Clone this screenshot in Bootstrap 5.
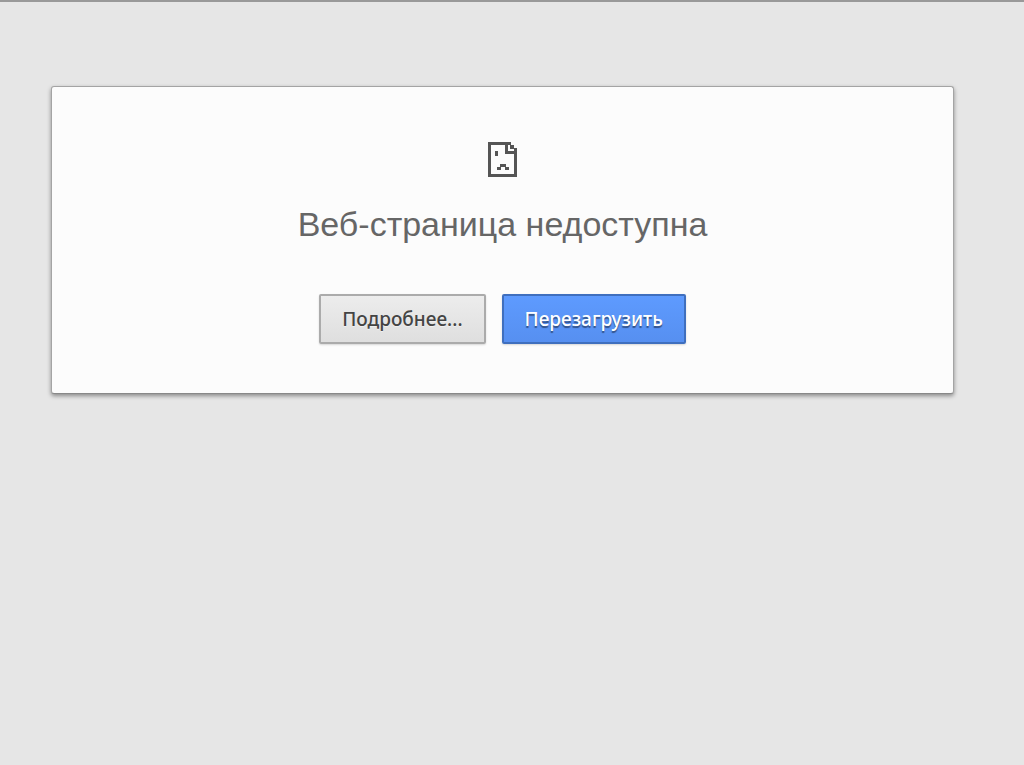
<!DOCTYPE html>
<html lang="ru">
<head>
<meta charset="utf-8">
<meta name="viewport" content="width=device-width, initial-scale=1">
<title>Веб-страница недоступна</title>
<link rel="stylesheet" href="https://cdn.jsdelivr.net/npm/bootstrap@5.3.0/dist/css/bootstrap.min.css">
<style>
body { background: #e6e6e6; border-top: 2px solid #999; font-family: "Liberation Sans", sans-serif; }
.error-page { padding: 84px 70px 40px 51px; }
.error-box { background: #fcfcfc; border: 1px solid #a4a4a4; border-bottom-color: #888; border-radius: 3px; box-shadow: 0 2px 4px rgba(0,0,0,.4); padding: 55px 20px 49px; }
.error-title { color: #666; font-size: 34px; line-height: 40px; margin: 27px 0 50px; }
.btn-page { --bs-btn-border-radius: 2px; font-family: "Noto Sans", sans-serif; font-size: 19px; font-weight: 500; line-height: 24px; padding: 11px 21px; border-width: 2px; box-shadow: 0 1px 2px rgba(0,0,0,.15); }
.btn-more { color: #444; background: linear-gradient(#ededed, #dedede) border-box; border-color: #ababab; text-shadow: 0 1px 0 #f0f0f0; }
.btn-reload { color: #fff; background: linear-gradient(#5e9bff, #568ff0) border-box; border-color: #3f6fbe; text-shadow: 0 2px 1px rgba(0,0,0,.45); }
</style>
</head>
<body>
<main class="error-page">
  <section class="error-box d-flex flex-column align-items-center text-center">
    <svg width="29" height="35" viewBox="0 0 29 35" fill="#555" aria-hidden="true">
      <path d="M0 0h23v3h-3v6h9v26H0zM3 3v29h23V12h-9V3z" fill-rule="evenodd"/>
      <path d="M22 3h4v4h-4zM26 6h3v4h-3zM7 9h3v5H7zM12 22h6v3h-6zM9 25h4v3H9zM17 25h4v3h-4z"/>
    </svg>
    <h1 class="error-title fw-normal">Веб-страница недоступна</h1>
    <div class="d-flex flex-wrap justify-content-center gap-3">
      <button type="button" class="btn btn-page btn-more">Подробнее...</button>
      <button type="button" class="btn btn-page btn-reload">Перезагрузить</button>
    </div>
  </section>
</main>
<script src="https://cdn.jsdelivr.net/npm/bootstrap@5.3.0/dist/js/bootstrap.bundle.min.js"></script>
</body>
</html>
